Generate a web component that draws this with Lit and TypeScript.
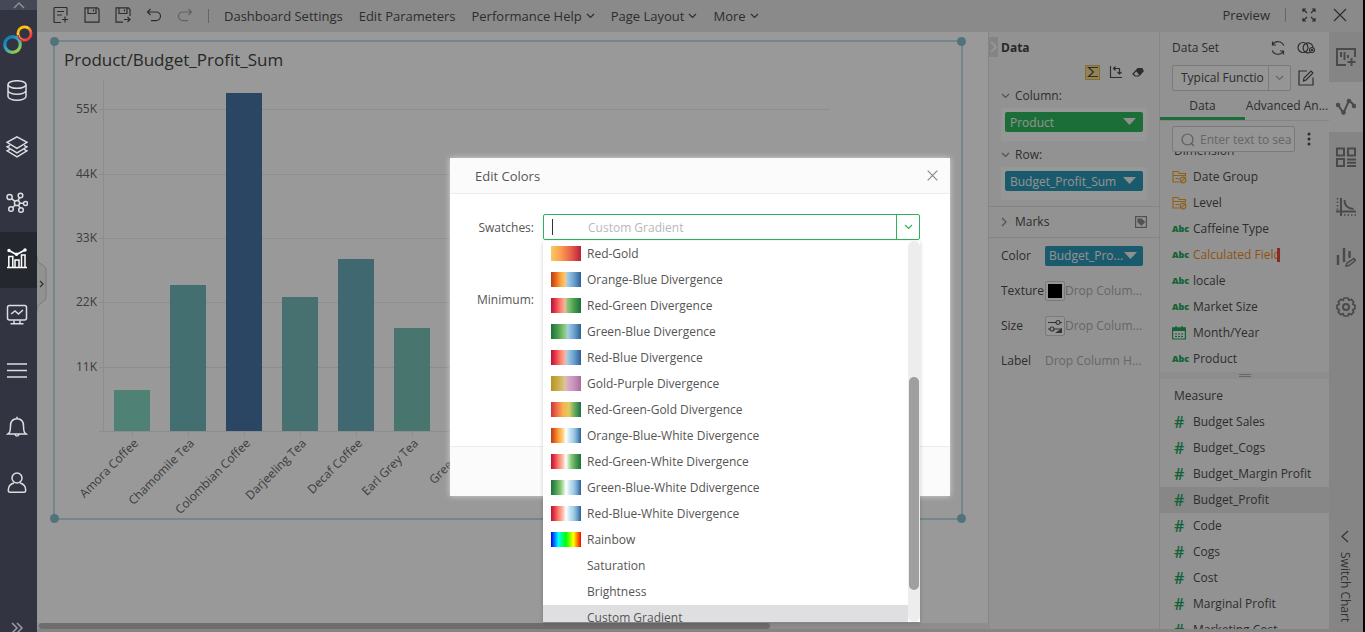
import { LitElement, html, svg, css, nothing } from "lit";
import { customElement, state } from "lit/decorators.js";
import { classMap } from "lit/directives/class-map.js";
import { styleMap } from "lit/directives/style-map.js";

const icon = (w: number, h: number, body: unknown) =>
  html`<svg width=${w} height=${h} viewBox="0 0 ${w} ${h}" aria-hidden="true">${body}</svg>`;

/* ---------- sidebar ---------- */
const logo = html`<svg width="32" height="30" viewBox="0 0 32 30" aria-hidden="true">
  <defs>
    <linearGradient id="warm" x1="0" y1="0" x2="1" y2="1">
      <stop offset="0" stop-color="#f6a800" /><stop offset=".35" stop-color="#ffd21e" />
      <stop offset=".6" stop-color="#f47a30" /><stop offset="1" stop-color="#e8104f" />
    </linearGradient>
    <linearGradient id="cool" x1="0" y1="0" x2=".8" y2="1">
      <stop offset="0" stop-color="#0a6cb0" /><stop offset=".5" stop-color="#2ba6c4" />
      <stop offset="1" stop-color="#a4cf3c" />
    </linearGradient>
  </defs>
  <circle cx="22.500" cy="8.500" r="6.600" fill="none" stroke="url(#warm)" stroke-width="2.800" />
  <circle cx="10.500" cy="19.500" r="7.800" fill="none" stroke="url(#cool)" stroke-width="3.200" />
  <path d="M16 10c.5 3 2 5 5 6" fill="none" stroke="#e8104f" stroke-width="1.500" />
</svg>`;

const navIcons = {
  database: svg`<ellipse cx="11" cy="4.500" rx="9" ry="3.800"/><path d="M2 4.500v12c0 2 4 3.800 9 3.800s9-1.800 9-3.800v-12M2 10.500c0 2 4 3.800 9 3.800s9-1.800 9-3.800"/>`,
  layers: svg`<path d="M11 .8l10 5.500-10 6-10-6zM4 9.300l-3 1.500 10 6 10-6-3-1.500M4 13.300l-3 1.500 10 6 10-6-3-1.500"/>`,
  graph: svg`<circle cx="11" cy="11" r="2.600"/><circle cx="3.600" cy="5" r="2.600"/><circle cx="14.500" cy="3.500" r="2.300"/><circle cx="19.500" cy="11.500" r="2"/><circle cx="5" cy="17" r="2.300"/><circle cx="15" cy="18" r="2.300"/><path d="M5.600 6.600L9 9.300M12 8.600l1.500-3M13.600 11.200h3.900M9.300 13l-2.800 2.500M12.400 13.200l1.600 2.700"/>`,
  chart: svg`<path d="M1 19.500h20M2.800 19V8.500h4V19M9 19v-7h4v7M15.500 19V7h3.500v12"/><path d="M3 2.500l7.500 4L19 2" stroke-width="1.700"/><circle cx="3" cy="2.500" r="1" fill="currentColor"/><circle cx="10.500" cy="6.300" r="1" fill="currentColor"/><circle cx="19" cy="2" r="1" fill="currentColor"/>`,
  monitor: svg`<rect x="1.500" y="1.500" width="19" height="14.500" rx="2"/><path d="M5 10l4-3 3.500 3L17 6M8 16.500v3M14 16.500v3M4.500 19.800h13"/>`,
  menu: svg`<path d="M1 4h20M1 10.500h20M1 17h20"/>`,
  bell: svg`<path d="M11 .8v1.500M3.500 16.500c1-2 1-3.500 1-6.500 0-4.500 2.500-7.300 6.500-7.300s6.500 2.800 6.500 7.300c0 3 0 4.500 1 6.500l1.700 1.500H1.800zM9 18.500c.3 2 3.700 2 4 0"/>`,
  user: svg`<circle cx="11" cy="6" r="5"/><path d="M8 11c-4 1-5.700 4-5.700 7.200 0 1.400.7 2 1.700 2h14c1 0 1.700-.6 1.700-2 0-3.200-1.700-6.200-5.700-7.200"/>`,
};
const navNames: [keyof typeof navIcons, string][] = [
  ["database", "Data source"], ["layers", "Data sets"], ["graph", "Machine learning"],
  ["chart", "Dashboards"], ["monitor", "Portal"], ["menu", "Schedule"],
  ["bell", "Messages"], ["user", "Account"],
];

@customElement("side-nav")
class SideNav extends LitElement {
  static styles = css`
    :host { display: flex; flex-direction: column; width: 37px; background: #323541; color: #dcdde0; overflow: hidden; }
    button { border: 0; padding: 0; margin: 0; background: none; color: inherit; display: flex; align-items: center; justify-content: center; flex: none; }
    svg { display: block; fill: none; stroke: currentColor; stroke-width: 1.5; }
    .up { height: 10px; background: #454856; color: #8c8e98; }
    .logo { height: 54px; display: flex; align-items: center; justify-content: center; flex: none; padding: 6px 2px 0 0; box-sizing: border-box; }
    .logo svg { stroke: none; }
    .item { height: 56px; padding: 0 3px 2px 0; }
    .item.active { background: #25272f; color: #fff; }
    .more { height: 10px; margin-top: auto; padding-right: 4px; align-items: flex-start; color: #9a9ca6; }
  `;
  render() {
    return html`
      <button class="up" aria-label="Scroll up">${icon(12, 8, svg`<path d="M1 7l5-5 5 5"/>`)}</button>
      <div class="logo">${logo}</div>
      ${navNames.map(([key, label]) => html`
        <button class=${classMap({ item: true, active: key === "chart" })} aria-label=${label}>
          ${icon(22, 22, navIcons[key])}
        </button>`)}
      <button class="more" aria-label="Expand">${icon(12, 12, svg`<path d="M1 1l5 5-5 5M6 1l5 5-5 5"/>`)}</button>`;
  }
}

/* ---------- toolbar ---------- */
const chevron = icon(9, 6, svg`<path d="M1 1l3.500 3.500L8 1"/>`);

@customElement("top-bar")
class TopBar extends LitElement {
  static styles = css`
    :host { display: flex; align-items: center; height: 32px; padding: 0 16px; background: #e7e7e7; color: #4c4c4c; font-size: 13px; }
    button { border: 0; padding: 0; margin: 0; background: none; color: inherit; font: inherit; line-height: 20px; display: flex; align-items: center; gap: 4px; white-space: nowrap; }
    svg { display: block; fill: none; stroke: currentColor; stroke-width: 1.2; }
    .icons { display: flex; gap: 15px; padding-bottom: 2px; }
    .faint { color: #a4a4a4; }
    .bar { width: 1px; height: 14px; background: #aaa; margin: 0 15px; }
    .menus { display: flex; gap: 16px; }
    .right { display: flex; align-items: center; margin-left: auto; padding-bottom: 2px; }
    .right .close { margin-left: 17px; }
    .right .bar { margin: 0 16px 0 15px; }
  `;
  render() {
    return html`
      <div class="icons">
        <button aria-label="New">${icon(16, 16, svg`<path d="M14 8.500V1.500a1 1 0 00-1-1H2a1 1 0 00-1 1v13a1 1 0 001 1h6M4 4.500h7M4 8h5M12 9.500v6M9 12.500h6"/>`)}</button>
        <button aria-label="Save">${icon(16, 16, svg`<path d="M1 .8h12.500L15 2.500v12.700H1zM4 1v5.500h8V1M9.500 2.500v2"/>`)}</button>
        <button aria-label="Save as">${icon(16, 16, svg`<path d="M15 9V2.500L13.500.8H1v14.400h7M4 1v5.500h8V1M9.500 2.500v2M9 12.500h6M12.500 10l2.500 2.500-2.500 2.500"/>`)}</button>
        <button aria-label="Undo">${icon(16, 16, svg`<path d="M4.500 2L1.500 5l3 3M1.500 5H10c2.500 0 4.500 2 4.500 4.300S12.500 13.600 10 13.600H5"/>`)}</button>
        <button class="faint" aria-label="Redo">${icon(16, 16, svg`<path d="M11.500 2l3 3-3 3M14.500 5H6C3.500 5 1.500 7 1.500 9.300S3.500 13.600 6 13.600h5"/>`)}</button>
      </div>
      <span class="bar"></span>
      <div class="menus">
        <button>Dashboard Settings</button>
        <button>Edit Parameters</button>
        <button>Performance Help ${chevron}</button>
        <button>Page Layout ${chevron}</button>
        <button>More ${chevron}</button>
      </div>
      <div class="right">
        <button>Preview</button>
        <span class="bar"></span>
        <button aria-label="Full screen">${icon(14, 14, svg`<path d="M1 4V1h3M1 1l4 4M10 1h3v3M13 1L9 5M1 10v3h3M1 13l4-4M13 10v3h-3M13 13L9 9"/>`)}</button>
        <button class="close" aria-label="Close">${icon(14, 14, svg`<path d="M1 1l12 12M13 1L1 13"/>`)}</button>
      </div>`;
  }
}

/* ---------- chart widget ---------- */
const BAR_STEP = 56;
const BASE = 391;
const products: [string, number, string][] = [
  ["Amora Coffee", 41, "#84d9c3"],
  ["Chamomile Tea", 146, "#71b9bb"],
  ["Colombian Coffee", 338, "#4976a5"],
  ["Darjeeling Tea", 134, "#76bcbb"],
  ["Decaf Coffee", 172, "#6badbb"],
  ["Earl Grey Tea", 103, "#78c5b9"],
  ["Green Tea", 22, "#8adfc4"],
];
const ticks: [string, number][] = [["55K", 69], ["44K", 134], ["33K", 198], ["22K", 262], ["11K", 327]];

@customElement("bar-widget")
class BarWidget extends LitElement {
  static styles = css`
    :host { display: block; position: relative; height: 476px; border: 2px solid #bfe0e8; }
    h2 { margin: 0; padding: 5px 9px 0; font-size: 17px; line-height: 26px; font-weight: 400; color: #444; }
    .plot { position: absolute; inset: 0; width: 100%; height: 100%; }
    .plot line { stroke: #ececec; }
    .plot text { font-size: 12px; fill: #666; }
    .dot { position: absolute; width: 9px; height: 9px; border-radius: 50%; background: #85c0cf; }
    .tl { left: -5px; top: -5px; } .tr { right: -5px; top: -5px; }
    .bl { left: -5px; bottom: -5px; } .br { right: -5px; bottom: -5px; }
  `;
  render() {
    return html`
      <h2>Product/Budget_Profit_Sum</h2>
      <svg class="plot" role="img" aria-label="Budget profit by product">
        ${ticks.map(([t, y]) => svg`<line x1="44" x2="775" y1=${y - 1.5} y2=${y - 1.5}></line>
          <text x="42" y=${y + 2} text-anchor="end">${t}</text>`)}
        <line x1="48.500" x2="48.500" y1="38" y2="390"></line>
        <line x1="44" x2="775" y1="389.500" y2="389.500"></line>
        ${products.map(([name, h, fill], i) => svg`
          <rect x=${59 + i * BAR_STEP} y=${BASE - 2 - h} width="36" height=${h} fill=${fill}></rect>
          <line x1=${77.5 + i * BAR_STEP} x2=${77.5 + i * BAR_STEP} y1="390" y2="394"></line>
          <text text-anchor="end" transform="translate(${84 + i * BAR_STEP} 402) rotate(-45)">${name}</text>`)}
      </svg>
      <i class="dot tl"></i><i class="dot tr"></i><i class="dot bl"></i><i class="dot br"></i>`;
  }
}

/* ---------- binding panel ---------- */
const caret = icon(13, 8, svg`<path d="M0 0h13L6.500 7z"/>`);

@customElement("binding-panel")
class BindingPanel extends LitElement {
  static styles = css`
    :host { display: block; position: relative; width: 170px; border-left: 1px solid #e0e0e0; border-right: 1px solid #e0e0e0; background: #f4f4f4; font-size: 12px; line-height: 20px; color: #4c4c4c; }
    button { border: 0; padding: 0; margin: 0; background: none; color: inherit; font: inherit; display: flex; align-items: center; }
    svg { display: block; fill: none; stroke: currentColor; stroke-width: 1.2; flex: none; }
    .fold { position: absolute; left: 0; top: 5px; width: 9px; height: 20px; background: #dcdcdc; color: #fff; justify-content: center; }
    h3 { margin: 0; padding: 6px 12px 0; font-size: 12px; line-height: 20px; font-weight: 700; color: #444; }
    .tools { display: flex; justify-content: flex-end; align-items: center; gap: 10px; height: 28px; padding: 0 15px; }
    .sum { width: 13px; height: 13px; background: #f7dc8a; outline: 1px solid #d9ba57; justify-content: center; }
    .head { height: 20px; padding: 0 12px; gap: 5px; }
    .head svg { color: #888; }
    .well { background: #fcfcfc; margin: 2px 12px 4px; padding: 4px 4px 9px; }
    .tag { display: flex; justify-content: space-between; width: 100%; min-width: 0; height: 20px; border-radius: 2px; padding: 0 7px 0 5px; color: #f4f4f4; background: #2eb85c; }
    .tag.blue { background: #2b96b4; }
    .tag svg { fill: #eee; stroke: none; }
    .marks { display: flex; align-items: center; justify-content: space-between; height: 30px; margin-top: 6px; padding: 0 12px; border-top: 1px solid #dcdcdc; border-bottom: 1px solid #dcdcdc; }
    .marks button { gap: 7px; }
    .marks svg { color: #888; }
    .grid { display: grid; grid-template-columns: 44px minmax(0, 1fr); grid-auto-rows: 35px; align-items: center; padding: 0 16px 0 12px; }
    .slot { display: flex; align-items: center; min-width: 0; color: #aaa; }
    .slot span { overflow: hidden; text-overflow: ellipsis; white-space: nowrap; }
    .tag span { overflow: hidden; text-overflow: ellipsis; white-space: nowrap; padding-top: 1px; }
    .tag.short { padding-left: 4px; padding-right: 6px; }
    .box { width: 20px; height: 20px; border: 1px solid #ccc; border-radius: 2px; background: #fafafa; justify-content: center; flex: none; color: #555; }
    .ink { width: 14px; height: 14px; background: #000; }
    .gray { color: #aaa; }
  `;
  render() {
    return html`
      <button class="fold" aria-label="Collapse">${icon(7, 12, svg`<path d="M1 1l5 5-5 5" stroke-width="1.500"/>`)}</button>
      <h3>Data</h3>
      <div class="tools">
        <button class="sum" aria-label="Aggregate">${icon(12, 12, svg`<path d="M11 1.500H1.500L6.500 6l-5 4.500H11"/>`)}</button>
        <button aria-label="Swap axes">${icon(13, 14, svg`<path d="M1.500 1v11.500H13M4.500 3.500h6v5M6.500 1.500l-2 2 2 2M8.500 7l2 2 2-2"/>`)}</button>
        <button aria-label="Clear">${icon(12, 12, svg`<path d="M1 8l5-5.500h3.500L11 5 6.500 10H3z"/><path d="M6 2.500h4L11 5 8 8.500 4.500 5z" fill="currentColor"/>`)}</button>
      </div>
      <button class="head">${chevron} Column:</button>
      <div class="well"><button class="tag"><span>Product</span>${caret}</button></div>
      <button class="head">${chevron} Row:</button>
      <div class="well"><button class="tag blue"><span>Budget_Profit_Sum</span>${caret}</button></div>
      <div class="marks">
        <button>${icon(7, 10, svg`<path d="M1 1l4 4-4 4"/>`)} Marks</button>
        <button class="gray" aria-label="Mark type">${icon(12, 12, svg`<rect x=".6" y=".6" width="10.800" height="10.800"/><path d="M3 3h3.500L9.500 6 6.500 9 3 6z" fill="currentColor"/>`)}</button>
      </div>
      <div class="grid">
        <span>Color</span><button class="tag blue short" title="Budget_Profit_Sum"><span>Budget_Pro...</span>${caret}</button>
        <span>Texture</span><div class="slot"><button class="box" aria-label="Texture"><i class="ink"></i></button><span>Drop Colum...</span></div>
        <span>Size</span><div class="slot"><button class="box" aria-label="Size">${icon(14, 14, svg`<path d="M0 3.500h8M12 3.500h2M0 10h2M6 10h8"/><circle cx="10" cy="3.500" r="2"/><circle cx="4" cy="10" r="2"/><path d="M7 14l7-5v5z" fill="currentColor" stroke="none"/>`)}</button><span>Drop Colum...</span></div>
        <span>Label</span><div class="slot"><span>Drop Column H...</span></div>
      </div>`;
  }
}

/* ---------- data set panel ---------- */
type Kind = "folder" | "abc" | "date" | "num";
const dimensions: [Kind, string][] = [
  ["folder", "Date Group"], ["folder", "Level"], ["abc", "Caffeine Type"], ["abc", "Calculated Field"],
  ["abc", "locale"], ["abc", "Market Size"], ["date", "Month/Year"], ["abc", "Product"],
];
const measures = ["Budget Sales", "Budget_Cogs", "Budget_Margin Profit", "Budget_Profit", "Code", "Cogs", "Cost", "Marginal Profit", "Marketing Cost"];

const kindMark = (k: Kind) => {
  if (k === "folder") return icon(15, 14, svg`<path d="M8 12H1V1.500h5L7.500 3.500H13.500V6.500M1 5.500h12.500M3.500 8.500h4"/><circle cx="11" cy="10" r="2.800"/><path d="M9.200 11.800l3.600-3.600"/>`);
  if (k === "date") return icon(14, 14, svg`<path d="M.6 2h12.800v11H.6z"/><path d="M.6 2h12.800v2.500H.6z" fill="currentColor"/><path d="M4 0v3M10 0v3M3 8h8.500M3 10.500h8.500" stroke-dasharray="2 1"/>`);
  return k === "abc" ? "Abc" : "#";
};

@customElement("dataset-panel")
class DatasetPanel extends LitElement {
  @state() private selected = "Budget_Profit";
  static styles = css`
    :host { display: flex; flex-direction: column; width: 169px; background: #f4f4f4; font-size: 12px; line-height: 20px; color: #4c4c4c; }
    button, select, input { border: 0; padding: 0; margin: 0; background: none; color: inherit; font: inherit; outline: none; }
    button { display: flex; align-items: center; }
    svg { display: block; fill: none; stroke: currentColor; stroke-width: 1.2; flex: none; }
    .title { display: flex; align-items: center; gap: 11px; padding: 5px 14px 0 12px; height: 22px; }
    .title span { margin-right: auto; }
    .pick { display: flex; align-items: center; gap: 7px; padding: 6px 12px 0; }
    .combo { display: flex; position: relative; align-items: center; width: 119px; height: 26px; box-sizing: border-box; border: 1px solid #ccc; border-radius: 2px; background: #f8f8f8; }
    select { appearance: none; width: 96px; height: 24px; padding-left: 8px; border-right: 1px solid #ccc; }
    .combo svg { margin-left: 6px; color: #aaa; }
    .tabs { display: grid; grid-template-columns: 85px 1fr; height: 29px; border-bottom: 1px solid #dedede; }
    .tabs button { display: block; text-align: center; white-space: nowrap; border-bottom: 3px solid transparent; padding-top: 3px; }
    .tabs .on { border-color: #2eb85c; }
    .find { display: flex; align-items: center; gap: 12px; padding: 5px 12px 0; flex: none; }
    .search { display: flex; align-items: center; gap: 5px; width: 123px; height: 26px; box-sizing: border-box; border: 1px solid #ccc; border-radius: 2px; padding: 2px 1px 0 8px; color: #999; background: #f8f8f8; }
    .search input { min-width: 0; width: 100%; }
    .search input::placeholder { color: #aaa; opacity: 1; }
    .dots svg { fill: currentColor; stroke: none; }
    ul { list-style: none; margin: 0; padding: 0; }
    .list { overflow: hidden; flex: none; }
    .dims { height: 220px; display: flex; flex-direction: column; justify-content: flex-end; }
    .meas { flex: 1 1 0; min-height: 0; padding-top: 4px; }
    li { height: 26px; }
    .cap { display: flex; align-items: center; height: 26px; padding-left: 14px; flex: none; }
    .field { width: 100%; height: 26px; padding-left: 12px; gap: 5px; white-space: nowrap; }
    .field.sel { background: #e2e2e2; }
    .mark { width: 16px; flex: none; color: #20a55a; display: flex; align-items: center; }
    .mark.abc { font-size: 9px; font-weight: 800; }
    .mark.num { font-size: 16px; font-weight: 600; padding-left: 2px; width: 14px; }
    .mark.folder { color: #f2a12c; }
    .warn { color: #ef8a1c; }
    .warn b { width: 3px; height: 14px; background: #e5483c; margin-left: -9px; }
    .split { height: 7px; background: #ececec; display: flex; flex-direction: column; align-items: center; gap: 1px; padding-top: 2px; box-sizing: border-box; flex: none; }
    .split i { width: 12px; height: 1px; background: #aaa; }
  `;
  private field(kind: Kind, name: string) {
    const warn = name === "Calculated Field";
    return html`<li><button class=${classMap({ field: true, sel: name === this.selected, warn })}
      @click=${() => (this.selected = name)}><span class="mark ${kind}">${kindMark(kind)}</span>${name}${warn ? html`<b></b>` : nothing}</button></li>`;
  }
  render() {
    return html`
      <div class="title"><span>Data Set</span>
        <button aria-label="Refresh">${icon(16, 16, svg`<path d="M13.800 5.500A6.300 6.300 0 002.500 5M2.200 10.500A6.300 6.300 0 0013.500 11M2.500 1.500V5H6M13.500 14.500V11H10"/>`)}</button>
        <button aria-label="Join">${icon(18, 14, svg`<circle cx="6" cy="6.500" r="5"/><path d="M13.500 11.300A5 5 0 1116 6"/><circle cx="15" cy="9" r="2.500"/><circle cx="15" cy="9" r=".6"/>`)}</button>
      </div>
      <div class="pick">
        <div class="combo"><select aria-label="Data set"><option>Typical Functio</option></select>${chevron}</div>
        <button aria-label="Edit data set">${icon(16, 16, svg`<path d="M9 1H1v14h14V7.500M5.500 11l.5-3L13 1l2 2-7 7z"/>`)}</button>
      </div>
      <div class="tabs"><button class="on">Data</button><button title="Advanced Analysis">Advanced An...</button></div>
      <div class="find">
        <label class="search">${icon(14, 14, svg`<circle cx="6.500" cy="6.500" r="5.500"/><path d="M10.500 10.500L13 13"/>`)}<input aria-label="Search" placeholder="Enter text to sea" /></label>
        <button class="dots" aria-label="More">${icon(4, 14, svg`<circle cx="2" cy="2" r="1.500"/><circle cx="2" cy="7" r="1.500"/><circle cx="2" cy="12" r="1.500"/>`)}</button>
      </div>
      <div class="list dims"><div class="cap">Dimension</div><ul>${dimensions.map(([k, n]) => this.field(k, n))}</ul></div>
      <div class="split"><i></i><i></i></div>
      <div class="list meas"><div class="cap">Measure</div><ul>${measures.map((n) => this.field("num", n))}</ul></div>`;
  }
}

/* ---------- right rail ---------- */
const railIcons: [string, unknown][] = [
  ["Add chart", svg`<path d="M10 18H1V2h18v8M5 5v5M8.500 5v8M12 8v3M15.500 11v8M11.500 15h8"/>`],
  ["Binding", svg`<path d="M2 8l5.500 8L13 3.500l5.500 5"/><circle cx="2" cy="8" r="1.300"/><circle cx="7.500" cy="15.500" r="1.300"/><circle cx="13" cy="4" r="1.300"/><circle cx="18" cy="9" r="1.300"/>`],
  ["Components", svg`<path d="M1 1.500h7v7H1zM12 1.500h7v7h-7zM1 12h7v7H1zM11 12.500h9M11 15.700h9M11 19h9"/>`],
  ["Analysis", svg`<path d="M5 1v18M0 14.500h20M8.500 3c0 5 3 8.500 9 9"/><path stroke-width="1.500" stroke-dasharray="1.500 2" d="M1.500 1v12M8 18h12"/>`],
  ["Format", svg`<path d="M2 8v10M8 1v14M13.500 4v7" stroke-width="2.500"/><path stroke-width="1.500" d="M10 19l1-3 7-4.500 1.500 2-6.500 5z"/>`],
  ["Settings", svg`<circle cx="10" cy="10" r="3"/><path stroke-linejoin="round" stroke-width="1.700" d="M8 1h4l.8 2.300 2.500-.9 2.400 2.400-1 2.400 2.300 1.100v3.400l-2.300 1.100 1 2.400-2.400 2.400-2.500-1L12 19H8l-.8-2.400-2.500 1-2.400-2.400 1-2.400L1 11.700V8.300l2.300-1.100-1-2.400 2.400-2.400 2.500.9z"/>`],
];

@customElement("tool-rail")
class ToolRail extends LitElement {
  static styles = css`
    :host { display: flex; flex-direction: column; width: 34px; background: #dedede; color: #7c7c7c; font-size: 12px; }
    button { border: 0; padding: 0; margin: 0; background: none; color: inherit; font: inherit; display: flex; align-items: center; justify-content: center; flex: none; }
    svg { display: block; fill: none; stroke: currentColor; stroke-width: 2; }
    .tab { height: 50px; }
    .tab.on { background: #f4f4f4; }
    .switch { margin-top: auto; writing-mode: vertical-rl; line-height: 16px; gap: 9px; padding-bottom: 7px; padding-right: 2px; color: #555; }
    .switch svg { stroke-width: 1.2; }
  `;
  render() {
    return html`${railIcons.map(([label, body], i) => html`
      <button class=${classMap({ tab: true, on: i === 1 })} aria-label=${label}>${icon(20, 20, body)}</button>`)}
      <button class="switch">${icon(8, 13, svg`<path d="M7 1L1 6.500 7 12"/>`)}Switch Chart</button>`;
  }
}

/* ---------- dialog ---------- */
const ORANGE = "#b0401c, #e8641c, #fba23c, #fdc870";
const RED = "#b8123c, #e83c48, #f98070, #fbb4a0";
const GREEN = "#1c6e3c, #4a9c50, #8acb78";
const GREEN_OUT = "#8acb78, #4a9c50, #1c6e3c";
const BLUE_OUT = "#a4cde4, #6aa0cc, #2c5e94";
const swatches: [string, string][] = [
  ["Red-Gold", "#f6cc60, #fb9c50, #e8604c, #b8203c"],
  ["Orange-Blue Divergence", `${ORANGE} 47%, #a4cde4 54%, #6aa0cc, #2c5e94`],
  ["Red-Green Divergence", `${RED} 47%, #8acb78 54%, #4a9c50, #1c6e3c`],
  ["Green-Blue Divergence", `${GREEN} 45%, #a4cde4 56%, #6aa0cc, #2c5e94`],
  ["Red-Blue Divergence", `${RED} 47%, #a4cde4 54%, #6aa0cc, #2c5e94`],
  ["Gold-Purple Divergence", "#b49428, #ccac48, #dcc890 47%, #dcacc8 54%, #c890bc, #ac6c98"],
  ["Red-Green-Gold Divergence", "#c83440, #f07048, #f8b050, #e0cc60, #60a860, #1c7044"],
  ["Orange-Blue-White Divergence", `${ORANGE}, #fff 50%, #c4e4f4, ${BLUE_OUT}`],
  ["Red-Green-White Divergence", `${RED}, #fff 50%, ${GREEN_OUT}`],
  ["Green-Blue-White Ddivergence", `${GREEN}, #fff 50%, #c4e4f4, ${BLUE_OUT}`],
  ["Red-Blue-White Divergence", `${RED}, #fff 50%, #c4e4f4, ${BLUE_OUT}`],
  ["Rainbow", "#00f, #0ff, #0f0, #ff0, #f00"],
  ["Saturation", ""],
  ["Brightness", ""],
  ["Custom Gradient", ""],
];

@customElement("color-dialog")
class ColorDialog extends LitElement {
  @state() private active = "Custom Gradient";
  static styles = css`
    :host { display: flex; flex-direction: column; width: 500px; height: 338px; background: #fff; box-shadow: 0 0 6px rgba(255, 255, 255, 0.6); font-size: 12px; line-height: 20px; color: #555; }
    button { border: 0; padding: 0; margin: 0; background: none; color: inherit; font: inherit; }
    svg { display: block; fill: none; stroke: currentColor; stroke-width: 1.2; }
    header { display: flex; align-items: center; justify-content: space-between; height: 35px; padding: 0 12px 0 25px; background: #fbfbfb; border-bottom: 1px solid #ececec; font-size: 13px; }
    header button { color: #888; }
    .body { flex: 1; display: grid; grid-template-columns: 84px 377px; column-gap: 9px; grid-auto-rows: 26px; row-gap: 46px; align-items: center; padding-top: 20px; }
    .name { text-align: right; padding-top: 2px; }
    footer { height: 49px; background: #fbfbfb; border-top: 1px solid #ececec; }
    .combo { position: relative; display: flex; height: 26px; box-sizing: border-box; border: 1px solid #2db35b; border-radius: 2px; }
    .combo input { flex: 1; min-width: 0; border: 0; outline: 0; padding: 2px 0 0 44px; background: none; font: inherit; color: #555; }
    .combo input::placeholder { color: #b8b8b8; opacity: 1; }
    .caret { position: absolute; left: 8px; top: 4px; width: 1px; height: 16px; background: #333; }
    .drop { width: 23px; box-sizing: border-box; border-left: 1px solid #2db35b; color: #2db35b; display: flex; align-items: center; justify-content: center; }
    .menu { position: absolute; left: -1px; right: -1px; top: 26px; height: 381px; display: flex; background: #fff; box-shadow: 0 1px 4px rgba(0, 0, 0, 0.2); overflow: hidden; }
    ul { list-style: none; margin: 0; padding: 0; flex: 1; }
    li { display: flex; align-items: center; gap: 6px; height: 26px; padding-left: 8px; color: #555; }
    li.on { background: #dfdfe1; }
    .ramp { width: 30px; height: 15px; margin-bottom: 1px; }
    .track { width: 12px; border-radius: 6px; background: #ededed; display: flex; justify-content: center; align-items: flex-start; padding-top: 136px; box-sizing: border-box; }
    .thumb { width: 10px; height: 213px; border-radius: 5px; background: #9f9f9f; }
  `;
  render() {
    return html`
      <header><span>Edit Colors</span><button aria-label="Close">${icon(11, 11, svg`<path d="M.7.7l9.600 9.600M10.300.7L.7 10.300"/>`)}</button></header>
      <div class="body">
        <label class="name" for="swatch">Swatches:</label>
        <div class="combo">
          <i class="caret"></i>
          <input id="swatch" placeholder="Custom Gradient" role="combobox" aria-expanded="true" aria-controls="menu" />
          <button class="drop" aria-label="Open list">${chevron}</button>
          <div class="menu">
            <ul id="menu" role="listbox">${swatches.map(([name, stops]) => html`
              <li role="option" aria-selected=${name === this.active} class=${classMap({ on: name === this.active })}
                @click=${() => (this.active = name)}>
                <span class="ramp" style=${styleMap(stops ? { background: `linear-gradient(90deg, ${stops})` } : {})}></span>${name}
              </li>`)}</ul>
            <div class="track"><div class="thumb"></div></div>
          </div>
        </div>
        <span class="name">Minimum:</span>
      </div>
      <footer></footer>`;
  }
}

/* ---------- page ---------- */
@customElement("app-root")
class AppRoot extends LitElement {
  static styles = css`
    :host { display: flex; height: 100vh; overflow: hidden; background: #000; font-family: "Open Sans", "Noto Sans", sans-serif; }
    .main { position: relative; flex: 1; min-width: 0; display: flex; flex-direction: column; margin-right: 2px; background: #fff; }
    .work { flex: 1; min-height: 0; display: flex; border-bottom: 3px solid #dcdcdc; }
    .canvas { flex: 1; min-width: 0; display: flex; flex-direction: column; }
    .sheet { flex: 1; min-height: 0; overflow: hidden; padding: 8px 25px 0 16px; }
    .hbar { height: 6px; background: #ebebeb; border-radius: 3px; padding-left: 2px; }
    .hbar i { display: block; width: 77%; height: 6px; border-radius: 3px; background: #b6b6b6; }
    .grip { position: absolute; left: 0; top: 255px; width: 10px; height: 57px; border: 0; padding: 0; background: none; color: #555; }
    .grip svg { display: block; }
    .shade { position: absolute; inset: 0; display: flex; align-items: center; justify-content: center; padding-top: 22px; box-sizing: border-box; background: rgba(0, 0, 0, 0.4); }
  `;
  render() {
    return html`
      <side-nav></side-nav>
      <div class="main">
        <top-bar></top-bar>
        <div class="work">
          <div class="canvas">
            <div class="sheet"><bar-widget></bar-widget></div>
            <div class="hbar"><i></i></div>
          </div>
          <binding-panel></binding-panel>
          <dataset-panel></dataset-panel>
          <tool-rail></tool-rail>
        </div>
        <button class="grip" aria-label="Expand resources">${icon(10, 57, svg`<path d="M0 .5C0 5 1 7 4 9s5 3 5 6v27c0 3-2 4-5 6s-4 4-4 8" fill="#f4f4f4" stroke="#ccc"/><path d="M3 26l3 3-3 3" fill="none" stroke="currentColor" stroke-width="1.300"/>`)}</button>
        <div class="shade"><color-dialog></color-dialog></div>
      </div>`;
  }
}
